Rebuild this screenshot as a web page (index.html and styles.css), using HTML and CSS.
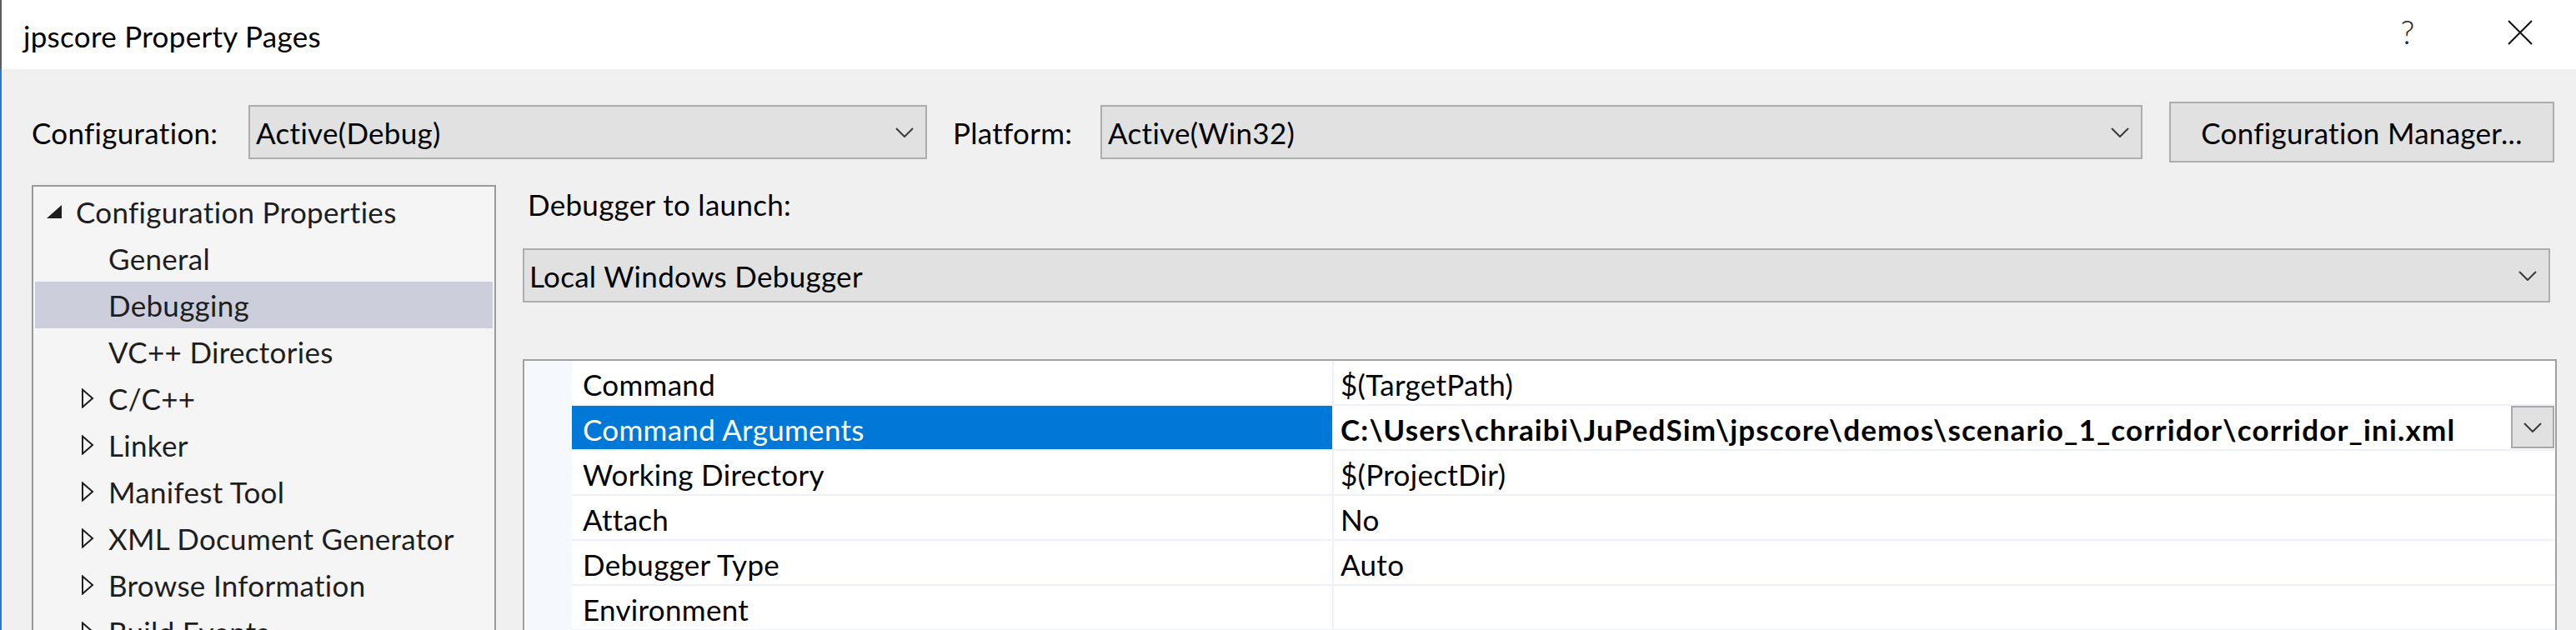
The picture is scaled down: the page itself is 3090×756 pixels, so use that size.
FILE: index.html
```html
<!DOCTYPE html>
<html lang="en">
<head>
<meta charset="utf-8">
<title>jpscore Property Pages</title>
<link rel="stylesheet" href="styles.css">
</head>
<body>
<div class="window">
  <header class="titlebar">
    <div class="title">jpscore Property Pages</div>
    <div class="caption-buttons">
      <span class="help">?</span>
      <svg class="close" width="30" height="30" viewBox="0 0 30 30"><path d="M1 1 L29 29 M29 1 L1 29" stroke="#111" stroke-width="2" fill="none"/></svg>
    </div>
  </header>
  <div class="client">
    <div class="config-row">
      <span class="lbl lbl-config">Configuration:</span>
      <div class="combo combo-config">
        <span class="combo-text">Active(Debug)</span>
        <svg class="chev" width="22" height="12" viewBox="0 0 22 12"><path d="M1 1 L11 11 L21 1" stroke="#3a3a3a" stroke-width="2" fill="none"/></svg>
      </div>
      <span class="lbl lbl-platform">Platform:</span>
      <div class="combo combo-platform">
        <span class="combo-text">Active(Win32)</span>
        <svg class="chev" width="22" height="12" viewBox="0 0 22 12"><path d="M1 1 L11 11 L21 1" stroke="#3a3a3a" stroke-width="2" fill="none"/></svg>
      </div>
      <div class="btn">Configuration Manager...</div>
    </div>
    <div class="main">
      <div class="tree">
        <div class="node lvl0"><span class="exp"><svg width="18" height="16" viewBox="0 0 18 16"><polygon points="18,0 18,16 0,16" fill="#1e1e1e"/></svg></span><span>Configuration Properties</span></div>
        <div class="node lvl1"><span class="exp"></span><span>General</span></div>
        <div class="node lvl1 selected"><span class="exp"></span><span>Debugging</span></div>
        <div class="node lvl1"><span class="exp"></span><span>VC++ Directories</span></div>
        <div class="node lvl1"><span class="exp"><svg width="16" height="24" viewBox="0 0 16 24"><polygon points="2,1.5 14,12 2,22.5" fill="none" stroke="#1e1e1e" stroke-width="2"/></svg></span><span>C/C++</span></div>
        <div class="node lvl1"><span class="exp"><svg width="16" height="24" viewBox="0 0 16 24"><polygon points="2,1.5 14,12 2,22.5" fill="none" stroke="#1e1e1e" stroke-width="2"/></svg></span><span>Linker</span></div>
        <div class="node lvl1"><span class="exp"><svg width="16" height="24" viewBox="0 0 16 24"><polygon points="2,1.5 14,12 2,22.5" fill="none" stroke="#1e1e1e" stroke-width="2"/></svg></span><span>Manifest Tool</span></div>
        <div class="node lvl1"><span class="exp"><svg width="16" height="24" viewBox="0 0 16 24"><polygon points="2,1.5 14,12 2,22.5" fill="none" stroke="#1e1e1e" stroke-width="2"/></svg></span><span>XML Document Generator</span></div>
        <div class="node lvl1"><span class="exp"><svg width="16" height="24" viewBox="0 0 16 24"><polygon points="2,1.5 14,12 2,22.5" fill="none" stroke="#1e1e1e" stroke-width="2"/></svg></span><span>Browse Information</span></div>
        <div class="node lvl1"><span class="exp"><svg width="16" height="24" viewBox="0 0 16 24"><polygon points="2,1.5 14,12 2,22.5" fill="none" stroke="#1e1e1e" stroke-width="2"/></svg></span><span>Build Events</span></div>
      </div>
      <div class="page">
        <div class="page-label">Debugger to launch:</div>
        <div class="combo combo-debugger">
          <span class="combo-text">Local Windows Debugger</span>
          <svg class="chev" width="22" height="12" viewBox="0 0 22 12"><path d="M1 1 L11 11 L21 1" stroke="#3a3a3a" stroke-width="2" fill="none"/></svg>
        </div>
        <div class="grid">
          <div class="row"><div class="gutter"></div><div class="name">Command</div><div class="value">$(TargetPath)</div></div>
          <div class="row selected"><div class="gutter"></div><div class="name">Command Arguments</div><div class="value"><span class="value-text bold">C:\Users\chraibi\JuPedSim\jpscore\demos\scenario_1_corridor\corridor_ini.xml</span><span class="dd"><svg width="22" height="12" viewBox="0 0 22 12"><path d="M1 1 L11 11 L21 1" stroke="#3a3a3a" stroke-width="2" fill="none"/></svg></span></div></div>
          <div class="row"><div class="gutter"></div><div class="name">Working Directory</div><div class="value">$(ProjectDir)</div></div>
          <div class="row"><div class="gutter"></div><div class="name">Attach</div><div class="value">No</div></div>
          <div class="row"><div class="gutter"></div><div class="name">Debugger Type</div><div class="value">Auto</div></div>
          <div class="row"><div class="gutter"></div><div class="name">Environment</div><div class="value"></div></div>
        </div>
      </div>
    </div>
  </div>
</div>
</body>
</html>
```

FILE: styles.css
```css
* { box-sizing: border-box; }

html, body {
  margin: 0;
  padding: 0;
  width: 3090px;
  height: 756px;
  overflow: hidden;
  background: #f0f0f0;
}

body {
  font-family: Lato, "Open Sans", "Noto Sans", sans-serif;
  font-size: 35px;
  letter-spacing: 0.3px;
  line-height: 42px;
  color: #000;
}

.window {
  width: 3090px;
  height: 756px;
  overflow: hidden;
}

.titlebar {
  height: 83px;
  background: #fff;
  border-left: 2px solid #5c5c5c;
  display: flex;
  justify-content: space-between;
  align-items: flex-start;
}

.title {
  margin-top: 22px;
  margin-left: 26px;
  color: #000;
}

.caption-buttons {
  display: flex;
  align-items: flex-start;
  padding-right: 52px;
}

.help {
  width: 40px;
  margin-top: 14px;
  margin-right: 100px;
  text-align: center;
  font-size: 39px;
  line-height: 48px;
  font-weight: 300;
  letter-spacing: 0;
  color: #222;
}

.close {
  margin-top: 24px;
  display: block;
}

.client {
  border-left: 2px solid #2c79cf;
  padding-left: 36px;
  height: 673px;
}

.config-row {
  display: flex;
  align-items: center;
  padding-top: 39px;
  height: 112px;
}

.lbl { white-space: nowrap; color: #000; }
.lbl-config { width: 260px; }
.lbl-platform { width: 208px; padding-left: 31px; }

.combo {
  height: 65px;
  background: #e1e1e1;
  border: 2px solid #adadad;
  display: flex;
  align-items: center;
  justify-content: space-between;
  padding-left: 7px;
  padding-right: 14px;
}

.combo-text { white-space: nowrap; }
.chev { display: block; }

.combo-config { width: 814px; }
.combo-platform { width: 1250px; }

.btn {
  margin-left: 32px;
  width: 462px;
  height: 73px;
  background: #e1e1e1;
  border: 2px solid #adadad;
  display: flex;
  align-items: center;
  justify-content: center;
  white-space: nowrap;
}

.main {
  display: flex;
  align-items: flex-start;
  margin-top: 27px;
}

.tree {
  width: 557px;
  height: 600px;
  background: #f5f5f5;
  border: 2px solid #9a9a9a;
  padding: 2px 2px 0 2px;
  color: #1e1e1e;
}

.node {
  height: 56px;
  display: flex;
  align-items: center;
  white-space: nowrap;
}

.node.selected { background: #cccedb; }

.lvl0 { padding-left: 14px; }
.lvl1 { padding-left: 53px; }

.exp {
  width: 35px;
  flex: none;
  display: flex;
  align-items: center;
}
.exp svg { display: block; }
.lvl1 .exp svg { margin-left: 2px; }

.page {
  margin-left: 32px;
  width: 2440px;
}

.page-label {
  padding-left: 6px;
  padding-top: 2px;
  height: 76px;
}

.combo-debugger {
  width: 2432px;
  padding-left: 6px;
}

.grid {
  margin-top: 68px;
  width: 2440px;
  height: 400px;
  background: #fff;
  border: 2px solid #a0a0a0;
}

.row {
  display: flex;
  height: 54px;
}

.gutter {
  width: 57px;
  flex: none;
  background: #f5f8fc;
}

.name {
  width: 912px;
  flex: none;
  padding-left: 13px;
  padding-top: 3px;
  display: flex;
  align-items: center;
  border-bottom: 2px solid #eef2f8;
  white-space: nowrap;
}

.value {
  flex: 1;
  display: flex;
  align-items: center;
  justify-content: space-between;
  padding-left: 8px;
  padding-right: 1px;
  padding-top: 3px;
  border-left: 2px solid #eef2f8;
  border-bottom: 2px solid #eef2f8;
  white-space: nowrap;
}

.row.selected .name {
  background: #0078d7;
  color: #fff;
}

.bold {
  font-weight: 700;
  letter-spacing: 1.15px;
}

.row.selected .value { padding-top: 0; }
.row.selected .value-text { padding-top: 3px; }

.dd {
  width: 52px;
  height: 51px;
  background: #e1e1e1;
  border: 2px solid #a8a8a8;
  display: flex;
  align-items: center;
  justify-content: center;
  align-self: flex-start;
}
.dd svg { display: block; }
```
